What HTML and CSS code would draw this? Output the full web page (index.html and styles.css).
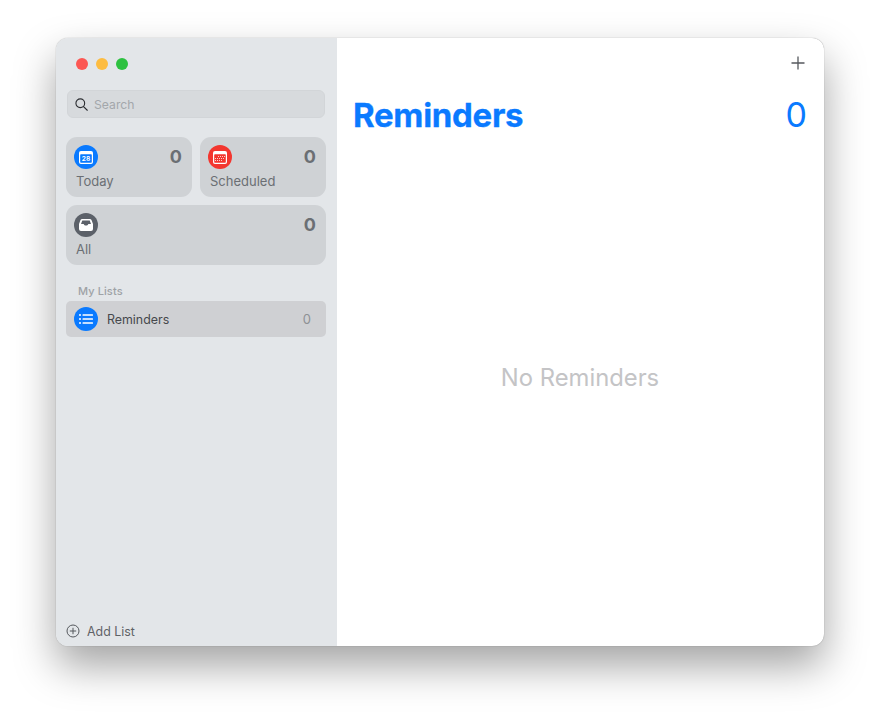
FILE: index.html
```html
<!DOCTYPE html>
<html lang="en">
<head>
  <meta charset="UTF-8">
  <title>Reminders</title>
  <link rel="stylesheet" href="styles.css">
</head>
<body>
  <div class="window">

    <!-- Sidebar -->
    <aside class="sidebar">
      <div class="traffic">
        <span class="dot dot-red"></span>
        <span class="dot dot-yellow"></span>
        <span class="dot dot-green"></span>
      </div>

      <div class="search">
        <svg class="search-icon" width="13" height="13" viewBox="0 0 14 14" fill="none" stroke="#2b2d31" stroke-width="1.200" stroke-linecap="round">
          <circle cx="5.700" cy="5.700" r="4.700"/>
          <path d="M9.200 9.200l4 4"/>
        </svg>
        <span>Search</span>
      </div>

      <div class="cards">
        <div class="card">
          <div class="card-top">
            <span class="badge badge-blue">
              <svg width="14" height="13" viewBox="0 0 14 13">
                <path fill="#fff" d="M2 0h10a2 2 0 0 1 2 2v9a2 2 0 0 1-2 2H2a2 2 0 0 1-2-2V2a2 2 0 0 1 2-2z"/>
                <rect x="1.200" y="3.200" width="11.600" height="8.600" rx=".8" fill="#0a7aff"/>
                <text x="7" y="10.200" class="cal-day">28</text>
              </svg>
            </span>
            <span class="card-count">0</span>
          </div>
          <div class="card-label">Today</div>
        </div>

        <div class="card">
          <div class="card-top">
            <span class="badge badge-red">
              <svg width="14" height="13" viewBox="0 0 14 13">
                <path fill="#fff" d="M2 0h10a2 2 0 0 1 2 2v9a2 2 0 0 1-2 2H2a2 2 0 0 1-2-2V2a2 2 0 0 1 2-2z"/>
                <rect x="1.200" y="3.200" width="11.600" height="8.600" rx=".8" fill="#f3362f"/>
                <path stroke="#fff" stroke-opacity=".75" stroke-width="1" stroke-dasharray="1 1" d="M5 5.500h7M2 7.500h10M2 9.500h7"/>
              </svg>
            </span>
            <span class="card-count">0</span>
          </div>
          <div class="card-label">Scheduled</div>
        </div>

        <div class="card card-wide">
          <div class="card-top">
            <span class="badge badge-gray">
              <svg width="14" height="12" viewBox="0 0 14 12">
                <path fill="#fff" d="M3.200 0h7.600c.8 0 1.400.4 1.700 1.100L14 5v5a2 2 0 0 1-2 2H2a2 2 0 0 1-2-2V5l1.500-3.900C1.800.4 2.400 0 3.200 0zM3.300 1.500L2 5h2.700c.4 1 1.200 1.500 2.300 1.500S8.900 6 9.300 5H12l-1.300-3.500z"/>
              </svg>
            </span>
            <span class="card-count">0</span>
          </div>
          <div class="card-label">All</div>
        </div>
      </div>

      <div class="lists-title">My Lists</div>
      <div class="list-row">
        <span class="badge badge-blue">
          <svg width="14" height="10" viewBox="0 0 14 10" fill="#fff">
            <circle cx="1" cy="1" r="1"/><circle cx="1" cy="5" r="1"/><circle cx="1" cy="9" r="1"/>
            <rect x="3.500" y=".3" width="10.500" height="1.400" rx=".5"/>
            <rect x="3.500" y="4.300" width="10.500" height="1.400" rx=".5"/>
            <rect x="3.500" y="8.300" width="10.500" height="1.400" rx=".5"/>
          </svg>
        </span>
        <span class="list-name">Reminders</span>
        <span class="list-count">0</span>
      </div>

      <div class="add-list">
        <svg width="14" height="14" viewBox="0 0 14 14" fill="none" stroke="#55585d" stroke-width="1">
          <circle cx="7" cy="7" r="6"/>
          <path d="M7 3.800v6.400M3.800 7h6.400"/>
        </svg>
        <span>Add List</span>
      </div>
    </aside>

    <!-- Main -->
    <main class="main">
      <div class="toolbar">
        <svg width="14" height="14" viewBox="0 0 14 14" fill="none" stroke="#55585d" stroke-width="1.300">
          <path d="M7 .5v13M.5 7h13"/>
        </svg>
      </div>
      <div class="main-head">
        <h1>Reminders</h1>
        <span class="main-count">0</span>
      </div>
      <div class="empty">No Reminders</div>
    </main>

  </div>
</body>
</html>
```

FILE: styles.css
```css
/* Page */
html, body {
  height: 100%;
}
body {
  margin: 0;
  padding: 38px 56px 0;
  box-sizing: border-box;
  background: #fff;
  font-family: Inter, "Liberation Sans", sans-serif;
  overflow: hidden;
}

/* Window */
.window {
  display: flex;
  width: 768px;
  height: 608px;
  border-radius: 12px;
  overflow: hidden;
  background: #fff;
  box-shadow: 0 0 1px rgba(0,0,0,0.45), 0 20px 42px rgba(0,0,0,0.36);
}

/* Sidebar */
.sidebar {
  display: flex;
  flex-direction: column;
  width: 281px;
  flex: none;
  box-sizing: border-box;
  padding: 20px 11px 0 10px;
  background: #e3e6e9;
}
.traffic {
  display: flex;
  gap: 8px;
  padding-left: 10px;
}
.dot {
  width: 12px;
  height: 12px;
  border-radius: 50%;
}
.dot-red { background: #fc5753; }
.dot-yellow { background: #fdbc40; }
.dot-green { background: #2dc140; }

.search {
  display: flex;
  align-items: center;
  gap: 6px;
  height: 28px;
  box-sizing: border-box;
  margin: 20px 1px 0;
  padding-left: 7px;
  border: 1px solid #d2d5d8;
  border-radius: 6px;
  background: #d7dadd;
  color: #a3a7ab;
  font-size: 12.200px;
}

.cards {
  display: grid;
  grid-template-columns: 126px 126px;
  gap: 8px;
  margin-top: 19px;
}
.card {
  height: 60px;
  box-sizing: border-box;
  padding: 8px 10px 0 8px;
  border-radius: 11px;
  background: #cfd2d5;
}
.card-wide {
  grid-column: 1 / 3;
}
.card-top {
  display: flex;
  align-items: flex-start;
  justify-content: space-between;
}
.badge {
  display: flex;
  align-items: center;
  justify-content: center;
  width: 24px;
  height: 24px;
  flex: none;
  border-radius: 50%;
}
.badge-blue { background: #0a7aff; }
.badge-red { background: #f3362f; }
.badge-gray { background: #5c6169; }
.cal-day {
  fill: #fff;
  font-size: 6.500px;
  font-weight: 700;
  text-anchor: middle;
}
.card-count {
  padding-top: 1px;
  color: #6b6f74;
  font-size: 18px;
  font-weight: 700;
  line-height: 22px;
}
.card-label {
  margin: 4px 0 0 2px;
  color: #6b6f74;
  font-size: 13px;
  line-height: 16px;
}

/* My Lists */
.lists-title {
  margin: 19px 0 3px 12px;
  color: #9ea2a6;
  font-size: 11px;
  font-weight: 500;
  letter-spacing: 0.1px;
  line-height: 14px;
}
.list-row {
  display: flex;
  align-items: center;
  height: 36px;
  padding: 0 15px 0 8px;
  border-radius: 5px;
  background: #cfd0d3;
}
.list-name {
  flex: 1;
  margin-left: 9px;
  color: #46484c;
  font-size: 12.400px;
}
.list-count {
  color: #8e9195;
  font-size: 13px;
}

.add-list {
  display: flex;
  align-items: center;
  gap: 7px;
  margin-top: auto;
  height: 30px;
  color: #5f6267;
  font-size: 12.400px;
}

/* Main */
.main {
  display: flex;
  flex-direction: column;
  flex: 1;
  padding: 0 17px 0 16px;
}
.toolbar {
  display: flex;
  justify-content: flex-end;
  padding: 18px 2px 0 0;
}
.main-head {
  display: flex;
  align-items: center;
  justify-content: space-between;
  margin-top: 25px;
}
h1 {
  margin: 0;
  color: #0a7aff;
  font-size: 33px;
  font-weight: 700;
  line-height: 40px;
  letter-spacing: -0.3px;
  -webkit-text-stroke: 0.3px #0a7aff;
}
.main-count {
  color: #0a7aff;
  font-size: 34px;
  line-height: 40px;
}
.empty {
  margin-top: 228px;
  text-align: center;
  color: #c4c4c6;
  font-size: 23.800px;
  line-height: 30px;
}
```
